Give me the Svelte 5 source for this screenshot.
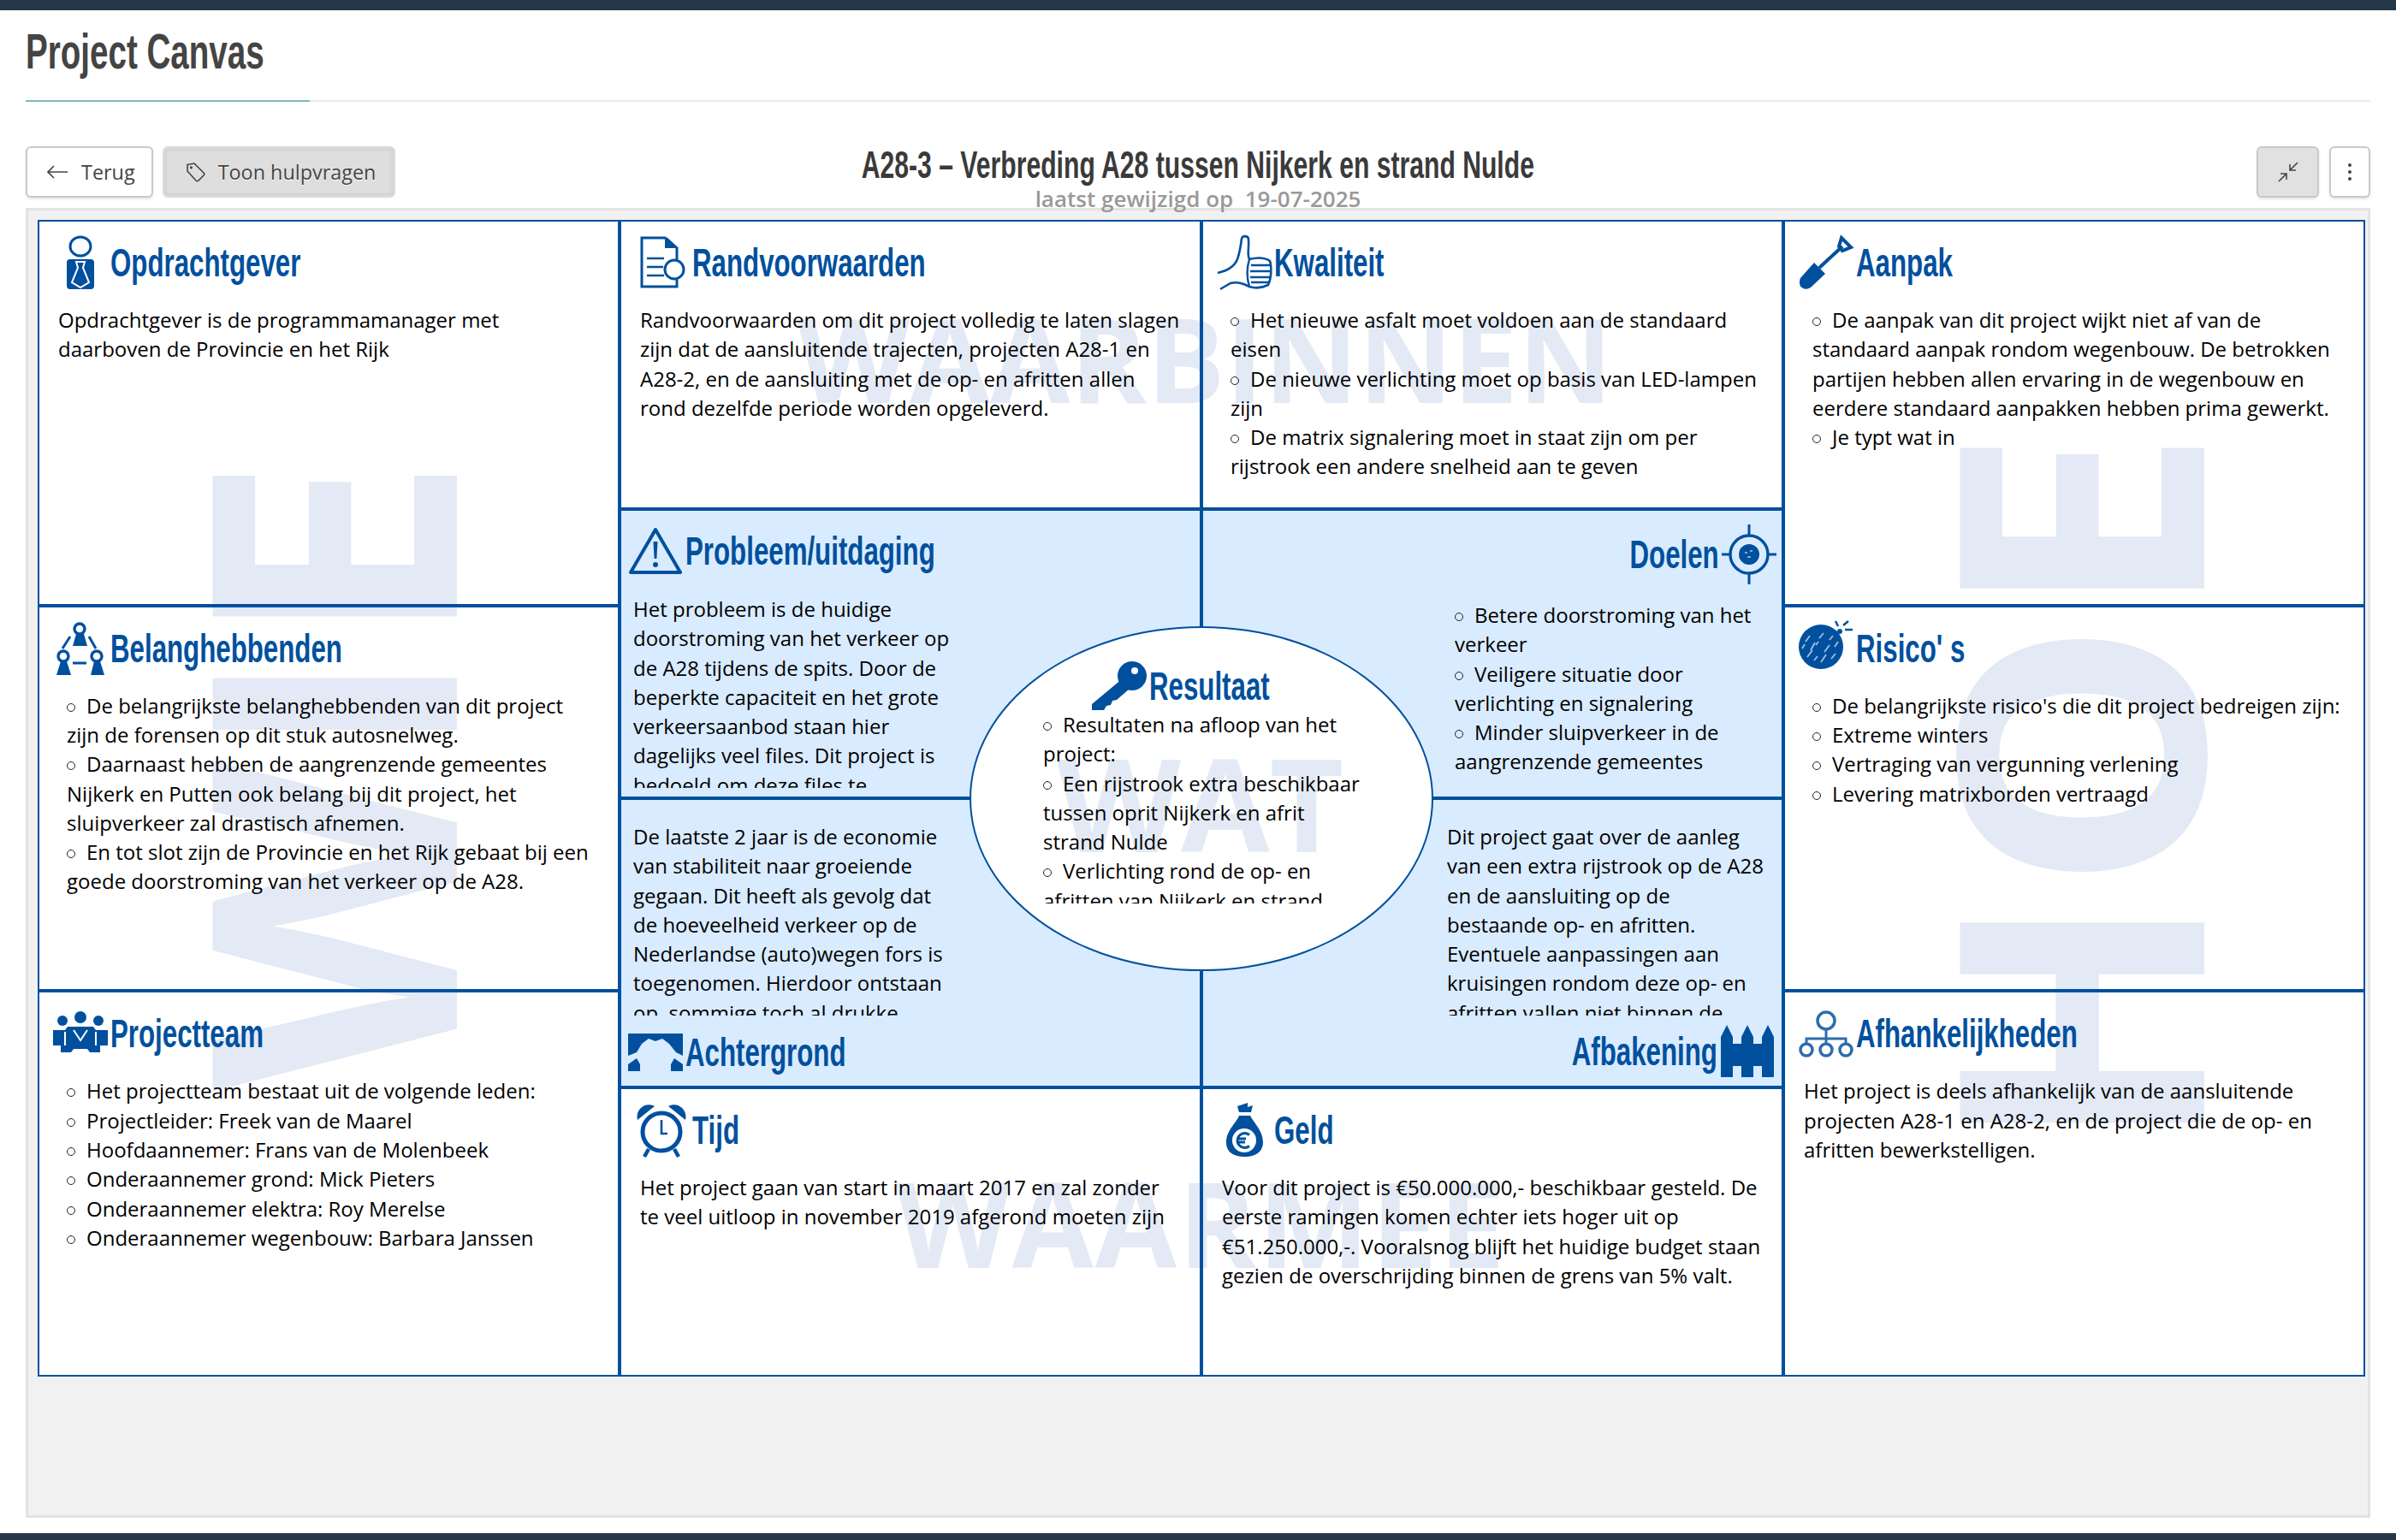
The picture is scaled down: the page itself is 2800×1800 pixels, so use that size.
<script>
  const lists = {
    kwaliteit: ['Het nieuwe asfalt moet voldoen aan de standaard eisen', 'De nieuwe verlichting moet op basis van LED-lampen zijn', 'De matrix signalering moet in staat zijn om per rijstrook een andere snelheid aan te geven'],
    aanpak: ['De aanpak van dit project wijkt niet af van de standaard aanpak rondom wegenbouw. De betrokken partijen hebben allen ervaring in de wegenbouw en eerdere standaard aanpakken hebben prima gewerkt.', 'Je typt wat in'],
    belang: ['De belangrijkste belanghebbenden van dit project zijn de forensen op dit stuk autosnelweg.', 'Daarnaast hebben de aangrenzende gemeentes Nijkerk en Putten ook belang bij dit project, het sluipverkeer zal drastisch afnemen.', 'En tot slot zijn de Provincie en het Rijk gebaat bij een goede doorstroming van het verkeer op de A28.'],
    risico: ["De belangrijkste risico's die dit project bedreigen zijn:", 'Extreme winters', 'Vertraging van vergunning verlening', 'Levering matrixborden vertraagd'],
    team: ['Het projectteam bestaat uit de volgende leden:', 'Projectleider: Freek van de Maarel', 'Hoofdaannemer: Frans van de Molenbeek', 'Onderaannemer grond: Mick Pieters', 'Onderaannemer elektra: Roy Merelse', 'Onderaannemer wegenbouw: Barbara Janssen'],
    doelen: ['Betere doorstroming van het verkeer', 'Veiligere situatie door verlichting en signalering', 'Minder sluipverkeer in de aangrenzende gemeentes'],
    resultaat: ['Resultaten na afloop van het project:', 'Een rijstrook extra beschikbaar tussen oprit Nijkerk en afrit strand Nulde', 'Verlichting rond de op- en afritten van Nijkerk en strand Nulde']
  };
</script>

{#snippet list(items)}
  <ul>{#each items as item}<li>{item}</li>{/each}</ul>
{/snippet}

{#snippet icon(name)}
  {#if name === 'person'}
    <svg class="ic" viewBox="0 0 64 64"><ellipse class="s" stroke-width="3" cx="32" cy="13" rx="12" ry="11"/><rect class="f" x="16" y="28" width="32" height="35" rx="4"/><path d="M27 31H37L35 38L42 55L32 61L22 55L29 38Z" fill="none" stroke="#fff" stroke-width="2"/></svg>
  {:else if name === 'doc'}
    <svg class="ic" viewBox="0 0 64 64"><path class="s" stroke-width="3" d="M36 3H8V60H49V52M49 28V15L36 3"/><path class="f" d="M35 3L35 15L50 15Z"/><circle cx="46" cy="40" r="11" fill="#fff" stroke="currentColor" stroke-width="3"/><path class="s" stroke-width="2.5" d="M14 27H34M14 37H33M14 47H34"/></svg>
  {:else if name === 'thumb'}
    <svg class="ic" viewBox="0 0 64 64"><path class="s" stroke-width="2.6" d="M1 44C10 42 20 38 24 28C27 20 28 12 29 4C30 0 37 0 37 5C38 14 35 22 38 28C46 26 56 26 62 30C64 36 64 50 60 58C52 62 44 62 38 60C30 56 24 54 16 56L4 63"/><path class="s" stroke-width="2.4" d="M38 28C35 38 35 50 38 60M40 35H62M39 42H63M39 49H63M40 55H61"/></svg>
  {:else if name === 'shovel'}
    <svg class="ic" viewBox="0 0 64 64"><path class="f" d="M2 50L18 32L31 45L14 61C6 66-2 60 2 50Z"/><path class="s" stroke-width="4" d="M24 38L51 13M50 3L61 14L51 18L47 13Z"/></svg>
  {:else if name === 'belang'}
    <svg class="ic" viewBox="0 0 64 64"><circle class="s" stroke-width="3.4" cx="31" cy="9" r="6"/><path class="f" d="M27 15H36L40 29H23Z"/><circle class="s" stroke-width="3.4" cx="12" cy="41" r="6"/><path class="f" d="M9 47H16L21 63H4Z"/><circle class="s" stroke-width="3.4" cx="51" cy="41" r="6"/><path class="f" d="M48 47H55L60 63H44Z"/><path class="s" stroke-width="3" d="M20 18L11 32M42 18L50 32M23 49H39"/></svg>
  {:else if name === 'team'}
    <svg class="ic" viewBox="0 0 64 64"><circle class="f" cx="11" cy="17" r="6"/><circle class="f" cx="32" cy="13" r="7"/><circle class="f" cx="53" cy="17" r="6"/><path class="f" d="M0 28H14L17 24H47L50 28H64V46H55V54H43L40 50H24L21 54H9V46H0Z"/><path d="M14 30V46M50 30V46M24 28L32 40L40 28" fill="none" stroke="#fff" stroke-width="2"/></svg>
  {:else if name === 'alert'}
    <svg class="ic" viewBox="0 0 64 56"><path class="s" stroke-width="4" stroke-linejoin="round" d="M32 3L61 53H3Z"/><path class="f" d="M29.5 17H34.5L33.4 37H30.6Z"/><circle class="f" cx="32" cy="44" r="3"/></svg>
  {:else if name === 'target'}
    <svg class="ic" viewBox="0 0 64 70"><path class="s" stroke-width="3" d="M32 0V14M32 56V70M0 35H11M53 35H64"/><circle class="s" stroke-width="3.4" cx="32" cy="35" r="22"/><circle class="f" cx="32" cy="35" r="12"/><path d="M27 33h3M33 31h3M30 38h4" stroke="#7ea7d0" stroke-width="2"/></svg>
  {:else if name === 'key'}
    <svg class="ic" viewBox="0 0 64 57"><path class="f" d="M36 20L0 50V57H14L17 52L22 51L24 46L29 45L44 32Z"/><circle class="f" cx="47" cy="17" r="17"/><circle cx="50" cy="11" r="4" fill="#fff"/></svg>
  {:else if name === 'bomb'}
    <svg class="ic" viewBox="0 0 64 64"><circle class="f" cx="26" cy="30" r="26"/><path class="s" stroke-width="2.5" d="M46 6L43 0M52 5L58 0M54 10H63M44 12H38"/><circle class="f" cx="48" cy="12" r="3"/><path d="M8 24l5-7M14 34l5-9M24 20l5-6M10 42l6-8M30 36l6-8M26 48l6-9M38 44l5-6M36 22l4-5M20 28l3-4M4 32l3-5M18 46l4-5M42 30l4-6" stroke="#9fc0e0" stroke-width="1.8"/></svg>
  {:else if name === 'org'}
    <svg class="ic org" viewBox="0 0 64 64"><circle class="s" stroke-width="3.5" cx="32" cy="17" r="10"/><path class="s" stroke-width="3" d="M32 27V38M9 45V38H55V45M32 38V45"/><circle class="s" stroke-width="3.5" cx="9" cy="51" r="7"/><circle class="s" stroke-width="3.5" cx="32" cy="51" r="7"/><circle class="s" stroke-width="3.5" cx="55" cy="51" r="7"/></svg>
  {:else if name === 'arch'}
    <svg class="ic" viewBox="0 0 64 44"><path class="f" d="M0 0H64V26L56 22L48 12L40 6L32 9L24 6L16 12L10 22L0 26Z"/><path class="f" d="M0 36L10 29L14 36V44H0ZM64 36L54 29L50 36V44H64Z"/></svg>
  {:else if name === 'fence'}
    <svg class="ic" viewBox="0 0 64 61"><path class="f" d="M1 61V14L8 0L15 14V22H25V14L32 0L39 14V22H49V14L56 0L63 14V61H49V48H39V61H25V48H15V61Z"/></svg>
  {:else if name === 'clock'}
    <svg class="ic" viewBox="0 0 64 64"><path class="f" d="M3 20C0 8 12-2 23 4ZM59 20C62 8 50-2 39 4Z"/><circle class="s" stroke-width="5" cx="31" cy="34" r="22"/><path class="s" stroke-width="2.6" d="M31 20V36H38"/><path class="s" stroke-width="4.5" d="M16 54L11 63M46 54L51 63"/></svg>
  {:else if name === 'bag'}
    <svg class="ic" viewBox="0 0 64 64"><path class="f" d="M24 4L36 0V5L42 3L40 11H26Z"/><path class="f" d="M26 15H39C42 22 54 32 54 46C54 58 44 63 33 63C20 63 11 58 11 46C11 32 24 22 26 15Z"/><circle cx="32" cy="44" r="14" fill="#fff"/><path class="s" stroke-width="3" d="M38 37.5A8.5 8.5 0 1 0 38 50.5M25 42H34M25 46H33"/></svg>
  {/if}
{/snippet}

{#snippet head(title, name)}
  <h3 class="head">{@render icon(name)}<span class="cond">{title}</span></h3>
{/snippet}

<div class="topbar"></div>
<main class="page">
  <header class="pagehead"><h1><span class="cond">Project Canvas</span></h1></header>

  <div class="toolbar">
    <div class="tools">
      <button class="btn back">
        <svg class="bi" viewBox="0 0 24 24" width="24" height="24"><path d="M1 12H24M8 5L1 12L8 19"/></svg>
        Terug
      </button>
      <button class="btn on">
        <svg class="bi" viewBox="0 0 24 24" width="24" height="24"><path d="M3 3.5L11 2L22 13C23 14 23 15 22 16L16 22C15 23 14 23 13 22L3 11Z"/><circle cx="7.5" cy="6.8" r=".8"/></svg>
        Toon hulpvragen
      </button>
    </div>
    <div class="titles">
      <h2><span class="cond">A28-3 – Verbreding A28 tussen Nijkerk en strand Nulde</span></h2>
      <p>laatst gewijzigd op &nbsp;19-07-2025</p>
    </div>
    <div class="tools right">
      <button class="btn square on2" aria-label="Verkleinen">
        <svg class="bi" viewBox="0 0 24 24" width="24" height="24"><path d="M1 23L10 14M3 14H10V21M23 1L14 10M14 3V10H21"/></svg>
      </button>
      <button class="btn dots" aria-label="Menu">
        <svg viewBox="0 0 6 24" width="6" height="24"><circle cx="3" cy="4" r="2"/><circle cx="3" cy="12" r="2"/><circle cx="3" cy="20" r="2"/></svg>
      </button>
    </div>
  </div>

  <section class="panel">
    <div class="canvas">
      <div class="mark wbinnen">WAARBINNEN</div>
      <div class="mark wmee">WAARMEE</div>
      <div class="mark wie">WIE</div>
      <div class="mark hoe">HOE</div>

      <article class="cell side c1 r1">
        {@render head('Opdrachtgever', 'person')}
        <p class="txt">Opdrachtgever is de programmamanager met daarboven de Provincie en het Rijk</p>
      </article>
      <article class="cell side c1 r2">
        {@render head('Belanghebbenden', 'belang')}
        {@render list(lists.belang)}
      </article>
      <article class="cell side c1 r3">
        {@render head('Projectteam', 'team')}
        {@render list(lists.team)}
      </article>

      <article class="cell side c2 m1">
        {@render head('Randvoorwaarden', 'doc')}
        <p class="txt">Randvoorwaarden om dit project volledig te laten slagen zijn dat de aansluitende trajecten, projecten A28-1 en A28-2, en de aansluiting met de op- en afritten allen rond dezelfde periode worden opgeleverd.</p>
      </article>
      <article class="cell side c3 m1">
        {@render head('Kwaliteit', 'thumb')}
        {@render list(lists.kwaliteit)}
      </article>

      <article class="cell blue probleem c2 m2">
        {@render head('Probleem/uitdaging', 'alert')}
        <div class="clip">Het probleem is de huidige doorstroming van het verkeer op de A28 tijdens de spits. Door de beperkte capaciteit en het grote verkeersaanbod staan hier dagelijks veel files. Dit project is bedoeld om deze files te verminderen.</div>
      </article>
      <article class="cell blue doelen c3 m2">
        {@render head('Doelen', 'target')}
        {@render list(lists.doelen)}
      </article>

      <article class="cell blue achter c2 m3">
        <div class="clip">De laatste 2 jaar is de economie van stabiliteit naar groeiende gegaan. Dit heeft als gevolg dat de hoeveelheid verkeer op de Nederlandse (auto)wegen fors is toegenomen. Hierdoor ontstaan op, sommige toch al drukke wegen, steeds meer files.</div>
        {@render head('Achtergrond', 'arch')}
      </article>
      <article class="cell blue afb c3 m3">
        <div class="clip">Dit project gaat over de aanleg van een extra rijstrook op de A28 en de aansluiting op de bestaande op- en afritten. Eventuele aanpassingen aan kruisingen rondom deze op- en afritten vallen niet binnen de scope.</div>
        {@render head('Afbakening', 'fence')}
      </article>

      <article class="cell side c2 m4">
        {@render head('Tijd', 'clock')}
        <p class="txt">Het project gaan van start in maart 2017 en zal zonder te veel uitloop in november 2019 afgerond moeten zijn</p>
      </article>
      <article class="cell side c3 m4">
        {@render head('Geld', 'bag')}
        <p class="txt">Voor dit project is €50.000.000,- beschikbaar gesteld. De eerste ramingen komen echter iets hoger uit op €51.250.000,-. Vooralsnog blijft het huidige budget staan gezien de overschrijding binnen de grens van 5% valt.</p>
      </article>

      <article class="cell side c4 r1">
        {@render head('Aanpak', 'shovel')}
        {@render list(lists.aanpak)}
      </article>
      <article class="cell side c4 r2">
        {@render head("Risico' s", 'bomb')}
        {@render list(lists.risico)}
      </article>
      <article class="cell side c4 r3">
        {@render head('Afhankelijkheden', 'org')}
        <p class="txt">Het project is deels afhankelijk van de aansluitende projecten A28-1 en A28-2, en de project die de op- en afritten bewerkstelligen.</p>
      </article>

      <div class="ellipse">
        <div class="mark wat">WAT</div>
        {@render head('Resultaat', 'key')}
        <div class="clip">{@render list(lists.resultaat)}</div>
      </div>
    </div>
  </section>
</main>
<div class="bottombar"></div>

<style>
  :global(body) {
    margin: 0;
    background: #fff;
    font-family: "Open Sans", "Liberation Sans", sans-serif;
    color: #000;
  }
  .topbar {
    height: 12px;
    background: #27374a;
  }
  .bottombar {
    height: 8px;
    margin-top: 18px;
    background: #27374a;
  }
  .page {
    padding: 0 30px;
  }
  .pagehead {
    position: relative;
    border-bottom: 2px solid #ebebeb;
    box-sizing: border-box;
    width: 100%;
    height: 107px;
  }
  .pagehead::after {
    content: "";
    position: absolute;
    left: 0;
    bottom: -2px;
    width: 332px;
    height: 2px;
    background: #7cb9c4;
  }
  .cond {
    display: inline-block;
    transform: scaleX(0.665);
    transform-origin: left center;
  }
  h1 {
    margin: 0;
    padding-top: 14px;
    font: 700 58px/68px "Liberation Sans", sans-serif;
    color: #444;
    white-space: nowrap;
  }
  .toolbar {
    display: grid;
    grid-template-columns: 1fr auto 1fr;
    height: 60px;
    margin-top: 52px;
  }
  .tools {
    display: flex;
    gap: 11px;
  }
  .tools.right {
    justify-content: flex-end;
    gap: 12px;
  }
  .btn {
    display: flex;
    align-items: center;
    box-sizing: border-box;
    height: 60px;
    border: 2px solid #c9c9c9;
    border-radius: 6px;
    background: #fff;
    color: #444;
    font: 400 23.4px "Open Sans", sans-serif;
    box-shadow: 0 2px 3px rgba(0, 0, 0, 0.1);
  }
  .btn.back {
    gap: 16px;
    padding: 0 19px 0 23px;
  }
  .btn.on {
    gap: 15px;
    padding: 0 20px 0 23px;
    background: #dedede;
    border: 3px solid #dadada;
    box-shadow: inset 0 0 4px rgba(0, 0, 0, 0.12);
    text-shadow: 0 1px 0 #fff;
  }
  .btn.on2 {
    width: 73px;
    padding: 0;
    justify-content: center;
    background: #e1e1e1;
  }
  .btn.dots {
    width: 48px;
    padding: 0;
    justify-content: center;
    fill: #444;
  }
  .bi {
    fill: none;
    stroke: #444;
    stroke-width: 1.6;
    flex: none;
  }
  .titles {
    position: relative;
    text-align: center;
    z-index: 1;
  }
  .titles h2 {
    margin: -3px 0 0;
    font: 700 44px/50px "Liberation Sans", sans-serif;
    color: #3a3a3a;
    white-space: nowrap;
  }
  .titles h2 .cond {
    transform: scaleX(0.685);
    transform-origin: center;
  }
  .titles p {
    margin: 0;
    font: 600 26px/28px "Open Sans", sans-serif;
    color: #999;
    white-space: pre;
  }
  .panel {
    box-sizing: border-box;
    height: 1531px;
    margin-top: 12px;
    padding: 11px 3px 0 11px;
    background: #f1f1f1;
    border: 3px solid #e2e2e2;
  }
  .canvas {
    position: relative;
    display: grid;
    grid-template-columns: repeat(4, 680px);
    grid-template-rows: repeat(12, 1fr);
    width: 2720px;
    height: 1352px;
    background: #fff;
  }
  .cell {
    position: relative;
    box-sizing: border-box;
    border: 2px solid #00509e;
    overflow: hidden;
    font-size: 24px;
    line-height: 34.3px;
  }
  .c1 { grid-column: 1; }
  .c2 { grid-column: 2; }
  .c3 { grid-column: 3; }
  .c4 { grid-column: 4; }
  .r1 { grid-row: 1 / 5; }
  .r2 { grid-row: 5 / 9; }
  .r3 { grid-row: 9 / 13; }
  .m1 { grid-row: 1 / 4; }
  .m2 { grid-row: 4 / 7; }
  .m3 { grid-row: 7 / 10; }
  .m4 { grid-row: 10 / 13; }
  .side {
    padding: 16px 16px 0;
  }
  .blue {
    background: #d9ebfe;
  }
  .head {
    display: flex;
    align-items: center;
    gap: 3px;
    margin: 0;
    height: 64px;
    color: #00509e;
    font: 700 47px/64px "Liberation Sans", sans-serif;
    white-space: nowrap;
  }
  .ic {
    flex: none;
    width: 64px;
    height: 64px;
    overflow: visible;
  }
  .f {
    fill: currentColor;
  }
  .s {
    fill: none;
    stroke: currentColor;
  }
  .org {
    color: #2f6cab;
  }
  .txt {
    width: 632px;
    margin: 18px 0 0 6px;
  }
  ul {
    width: 622px;
    margin: 18px 0 0 16px;
    padding: 0;
    list-style: none;
  }
  li::before {
    content: "";
    display: inline-block;
    box-sizing: border-box;
    width: 10px;
    height: 10px;
    margin: 0 13px 2px 0;
    border: 1.4px solid #222;
    border-radius: 50%;
  }
  .clip {
    overflow: hidden;
    height: 226px;
    width: 376px;
  }
  .clip ul {
    width: auto;
    margin: 0;
  }
  .probleem {
    padding: 19px 0 0 8px;
  }
  .probleem .head {
    height: 56px;
  }
  .probleem .ic {
    height: 56px;
  }
  .probleem .clip {
    margin: 23px 0 0 6px;
  }
  .doelen {
    padding-top: 16px;
  }
  .doelen .head {
    justify-content: flex-end;
    height: 70px;
    padding-right: 6px;
  }
  .doelen .head span,
  .afb .head span {
    order: -1;
    transform-origin: right center;
  }
  .doelen .ic {
    height: 70px;
  }
  .doelen ul {
    margin: 19px 0 0 294px;
    width: 370px;
  }
  .achter {
    padding: 26px 0 0 8px;
  }
  .achter .clip {
    margin-left: 6px;
  }
  .achter .head {
    height: 44px;
    margin-top: 21px;
  }
  .achter .ic {
    height: 44px;
  }
  .afb {
    padding-top: 26px;
  }
  .afb .clip {
    margin-left: 285px;
  }
  .afb .head {
    justify-content: flex-end;
    height: 61px;
    margin-top: 11px;
    padding-right: 8px;
  }
  .afb .ic {
    height: 61px;
  }
  .ellipse {
    position: absolute;
    left: 1089px;
    top: 475px;
    width: 542px;
    height: 403px;
    box-sizing: border-box;
    border: 2px solid #00509e;
    border-radius: 50%;
    background: #fff;
    font-size: 24px;
    line-height: 34.3px;
    padding: 39px 0 0 141px;
  }
  .ellipse .head {
    position: relative;
    height: 57px;
  }
  .ellipse .ic {
    height: 57px;
  }
  .ellipse .clip {
    position: relative;
    margin-left: -57px;
    width: 380px;
  }
  .mark {
    position: absolute;
    color: #e3eaf5;
    font: 700 136px/1 "Open Sans", sans-serif;
    white-space: nowrap;
  }
  .wbinnen {
    left: 1364px;
    top: 162px;
    transform: translate(-50%, -50%);
  }
  .wmee {
    left: 1360px;
    top: 1171px;
    font-size: 138px;
    letter-spacing: 2px;
    transform: translate(-50%, -50%);
  }
  .wat {
    left: 100px;
    top: 129px;
    font-size: 150px;
  }
  .wie,
  .hoe {
    font-size: 400px;
    transform: translate(-50%, -50%) rotate(-90deg);
  }
  .wie {
    left: 335px;
    top: 647px;
  }
  .hoe {
    left: 2377px;
    top: 667px;
  }
</style>
